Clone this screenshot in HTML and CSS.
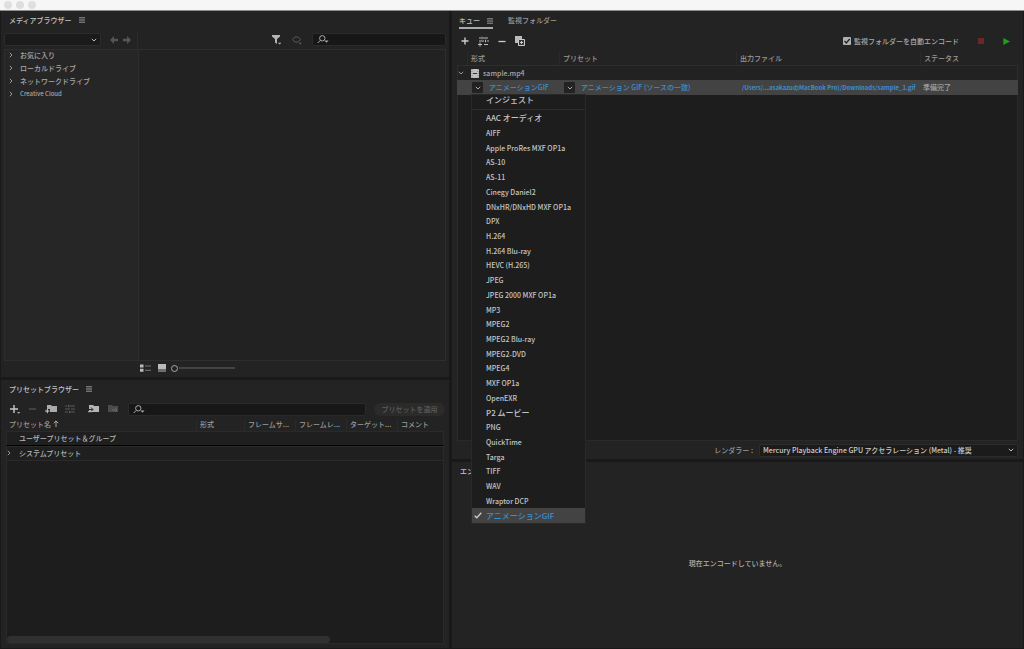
FILE: index.html
```html
<!DOCTYPE html>
<html lang="ja">
<head>
<meta charset="utf-8">
<title>Media Encoder</title>
<link rel="stylesheet" href="styles.css">
</head>
<body>
<header class="titlebar"><i class="light"></i><i class="light"></i><i class="light"></i></header>
<main class="workspace">
  <div class="column column-left">
    <section class="panel media">
      <div class="panel-head"><h2 class="panel-title">メディアブラウザー</h2>
        <button class="icon-btn" aria-label="パネルメニュー"><svg width="6" height="6" viewBox="0 0 6 6" stroke="#999"><path d="M0 .8h6M0 3h6M0 5.200h6"/></svg></button></div>
      <div class="media-tools">
        <div class="media-path">
          <select class="select path-select" aria-label="場所"><option></option></select>
          <button class="icon-btn" aria-label="戻る"><svg width="8" height="8" viewBox="0 0 8 8" fill="#555"><path d="M0 4l4-4v2.700h4v2.600H4V8z"/></svg></button>
          <button class="icon-btn" aria-label="進む"><svg width="8" height="8" viewBox="0 0 8 8" fill="#555"><path d="M8 4L4 0v2.700H0v2.600h4V8z"/></svg></button>
        </div>
        <div class="media-filter">
          <button class="icon-btn" aria-label="フィルター"><svg width="10" height="10" viewBox="0 0 10 10" fill="#b5b5b5"><path d="M0 0h8v1.500L5 4v5L3 7.500V4L0 1.500zM6 7.700h3.400L7.700 9.500z"/></svg></button>
          <button class="icon-btn" aria-label="表示"><svg width="10" height="10" viewBox="0 0 10 10" fill="none" stroke="#606060"><path d="M.6 4.500C2.500 1 6.500 1 8.400 4.500 6.500 8 2.500 8 .6 4.500z"/><path d="M6.500 7.700h3.400L8.200 9.500z" fill="#606060" stroke="none"/></svg></button>
          <label class="search"><svg width="12" height="9" viewBox="0 0 12 9"><circle cx="5.300" cy="3.300" r="2.700" fill="none" stroke="#aaa"/><path d="M3.500 5.200L.7 8" stroke="#aaa"/><path d="M7.500 5.500h4L9.500 7.700z" fill="#aaa"/></svg><input type="text" aria-label="メディアを検索"></label>
        </div>
      </div>
      <div class="media-body">
        <ul class="tree">
          <li><svg class="chev" viewBox="0 0 4 6"><path d="M.8.800L3 3 .8 5.200"/></svg>お気に入り</li>
          <li><svg class="chev" viewBox="0 0 4 6"><path d="M.8.800L3 3 .8 5.200"/></svg>ローカルドライブ</li>
          <li><svg class="chev" viewBox="0 0 4 6"><path d="M.8.800L3 3 .8 5.200"/></svg>ネットワークドライブ</li>
          <li><svg class="chev" viewBox="0 0 4 6"><path d="M.8.800L3 3 .8 5.200"/></svg><span class="small">Creative Cloud</span></li>
        </ul>
        <div class="media-view"></div>
      </div>
      <div class="media-foot">
        <button class="icon-btn" aria-label="リスト表示"><svg width="11" height="8" viewBox="0 0 11 8"><path d="M0 .5h3.500v3H0zM0 4.700h3.500v3H0z" fill="#bbb"/><path d="M5 2h6M5 6.300h6" stroke="#777"/></svg></button>
        <button class="icon-btn" aria-label="サムネール表示"><svg width="8" height="8" viewBox="0 0 8 8" fill="#bbb"><path d="M0 0h8v5.500H0zM0 6.500h8v1H0z"/></svg></button>
        <input class="zoom" type="range" min="0" max="100" value="0" aria-label="サムネールサイズ">
      </div>
    </section>

    <section class="panel presets">
      <div class="panel-head"><h2 class="panel-title">プリセットブラウザー</h2>
        <button class="icon-btn" aria-label="パネルメニュー"><svg width="6" height="6" viewBox="0 0 6 6" stroke="#999"><path d="M0 .8h6M0 3h6M0 5.200h6"/></svg></button></div>
      <div class="preset-tools">
        <button class="icon-btn" aria-label="新規プリセット"><svg width="11" height="10" viewBox="0 0 11 10"><path d="M0 5h8M4 1v8" stroke="#c8c8c8" stroke-width="1.400"/><path d="M7 8h3.400L8.700 9.800z" fill="#aaa"/></svg></button>
        <button class="icon-btn" aria-label="削除"><svg width="8" height="10" viewBox="0 0 8 10"><path d="M0 5h7" stroke="#555" stroke-width="1.200"/></svg></button>
        <button class="icon-btn" aria-label="新規グループ"><svg width="12" height="10" viewBox="0 0 12 10"><path d="M2 1h4l1 1h5v6H5V5H2z" fill="#aaa"/><path d="M0 7h4.500M2.300 4.800v4.400" stroke="#ccc"/></svg></button>
        <button class="icon-btn" aria-label="設定"><svg width="10" height="10" viewBox="0 0 10 10" stroke="#5b5b5b"><path d="M0 2h2M4 2h6M0 5h5M8 5h2M0 8h3M5 8h5M3.500.800v2.400M7 3.800v2.400M4.500 6.800v2.400"/></svg></button>
        <button class="icon-btn import-btn" aria-label="読み込み"><svg width="11" height="10" viewBox="0 0 11 10"><path d="M1 1h4l1 1h5v6H1z" fill="#b5b5b5"/><path d="M.5 5.500h4M3 3.500l2 2-2 2" fill="none" stroke="#222"/><path d="M0 7.700h4" stroke="#b5b5b5"/></svg></button>
        <button class="icon-btn" aria-label="書き出し"><svg width="11" height="10" viewBox="0 0 11 10"><path d="M1 1h4l1 1h5v6H1z" fill="#4b4b4b"/><path d="M5 6h5M8 4l2 2-2 2" fill="none" stroke="#686868"/></svg></button>
        <label class="search"><svg width="12" height="9" viewBox="0 0 12 9"><circle cx="5.300" cy="3.300" r="2.700" fill="none" stroke="#aaa"/><path d="M3.500 5.200L.7 8" stroke="#aaa"/><path d="M7.500 5.500h4L9.500 7.700z" fill="#aaa"/></svg><input type="text" aria-label="プリセットを検索"></label>
        <button class="apply" disabled>プリセットを適用</button>
      </div>
      <table class="preset-table">
        <colgroup><col class="p-name"><col class="p-format"><col class="p-meta"><col class="p-meta"><col class="p-meta"><col></colgroup>
        <thead><tr><th>プリセット名 <svg width="6" height="7" viewBox="0 0 6 7" fill="none" stroke="#aaa"><path d="M3 7V1M.7 3.200L3 .9l2.300 2.300"/></svg></th><th>形式</th><th>フレームサ...</th><th>フレームレ...</th><th>ターゲット...</th><th>コメント</th></tr></thead>
        <tbody>
          <tr class="user"><td colspan="6">ユーザープリセット＆グループ</td></tr>
          <tr class="system"><td colspan="6"><svg class="chev" viewBox="0 0 4 6"><path d="M.8.800L3 3 .8 5.200"/></svg>システムプリセット</td></tr>
        </tbody>
      </table>
      <div class="preset-rest"><div class="scrollbar"></div></div>
    </section>
  </div>

  <div class="column column-right">
    <section class="panel queue">
      <div class="panel-head tabs">
        <div class="tab active"><h2 class="panel-title">キュー</h2><button class="icon-btn" aria-label="パネルメニュー"><svg width="6" height="6" viewBox="0 0 6 6" stroke="#999"><path d="M0 .8h6M0 3h6M0 5.200h6"/></svg></button></div>
        <a class="tab" href="#watch">監視フォルダー</a>
      </div>
      <div class="queue-tools">
        <button class="icon-btn" aria-label="追加"><svg width="8" height="8" viewBox="0 0 8 8"><path d="M.5 4h7M4 .5v7" stroke="#ccc" stroke-width="1.400"/></svg></button>
        <button class="icon-btn" aria-label="出力を追加"><svg width="11" height="11" viewBox="0 0 11 11" stroke="#bbb"><path d="M1 2h2M5 2h5M4 .7v2.600M1 5h5M9 5h2M7.500 3.700v2.600M6 8.500h4M0 8.500h4M2 6.500v4"/></svg></button>
        <button class="icon-btn" aria-label="削除"><svg width="8" height="8" viewBox="0 0 8 8"><path d="M.5 4.500h7" stroke="#ccc" stroke-width="1.300"/></svg></button>
        <button class="icon-btn" aria-label="複製"><svg width="10" height="10" viewBox="0 0 10 10"><path d="M0 0h7v3H3v4H0z" fill="#bbb"/><path d="M3.500 3.500h6v6h-6z" fill="#333" stroke="#ccc"/><path d="M5 6.500h3M6.500 5v3" stroke="#ccc"/></svg></button>
        <label class="auto"><input type="checkbox" checked>監視フォルダーを自動エンコード</label>
        <button class="icon-btn" aria-label="停止"><svg width="6" height="6" viewBox="0 0 6 6"><path d="M0 0h6v6H0z" fill="#6b2626"/></svg></button>
        <button class="icon-btn" aria-label="開始"><svg width="7" height="7" viewBox="0 0 7 7"><path d="M.3 0L7 3.500.3 7z" fill="#1ca01c"/></svg></button>
      </div>
      <table class="queue-table">
        <colgroup><col class="q-lead"><col class="q-format"><col class="q-preset"><col><col class="q-status"></colgroup>
        <thead><tr><td></td><th>形式</th><th>プリセット</th><th>出力ファイル</th><th>ステータス</th></tr></thead>
        <tbody>
          <tr class="source"><td colspan="5"><span class="line"><svg width="6" height="4" viewBox="0 0 6 4" fill="none" stroke="#999"><path d="M.8.800L3 3 5.200.8"/></svg><svg width="8" height="9" viewBox="0 0 8 9"><path d="M0 0h8v9H0z" fill="#c0c0c0"/><path d="M2 4.500h4" stroke="#333"/><path d="M1 0v9M7 0v9" stroke="#888" stroke-dasharray="1 1"/></svg>sample.mp4</span></td></tr>
          <tr class="job"><td></td>
            <td class="format-cell"><span class="line"><button class="drop" aria-label="形式を選択" aria-expanded="true"><svg width="6" height="4" viewBox="0 0 6 4"><path d="M.8.800L3 3 5.200.8"/></svg></button><a href="#format">アニメーションGIF</a></span>
              <div class="menu">
                <button class="menu-top kana">インジェスト</button>
                <ul class="formats">
                  <li><button class="kana">AAC オーディオ</button></li><li><button>AIFF</button></li><li><button>Apple ProRes MXF OP1a</button></li><li><button>AS-10</button></li><li><button>AS-11</button></li><li><button>Cinegy Daniel2</button></li><li><button>DNxHR/DNxHD MXF OP1a</button></li><li><button>DPX</button></li><li><button>H.264</button></li><li><button>H.264 Blu-ray</button></li><li><button>HEVC (H.265)</button></li><li><button>JPEG</button></li><li><button>JPEG 2000 MXF OP1a</button></li><li><button>MP3</button></li><li><button>MPEG2</button></li><li><button>MPEG2 Blu-ray</button></li><li><button>MPEG2-DVD</button></li><li><button>MPEG4</button></li><li><button>MXF OP1a</button></li><li><button>OpenEXR</button></li><li><button class="kana">P2 ムービー</button></li><li><button>PNG</button></li><li><button>QuickTime</button></li><li><button>Targa</button></li><li><button>TIFF</button></li><li><button>WAV</button></li><li><button>Wraptor DCP</button></li>
                  <li><button class="kana chosen"><svg width="8" height="7" viewBox="0 0 8 7" fill="none" stroke="#ccc" stroke-width="1.300"><path d="M.7 3.700L2.800 5.800 7.300.8"/></svg>アニメーションGIF</button></li>
                </ul>
              </div></td>
            <td><span class="line"><button class="drop" aria-label="プリセットを選択"><svg width="6" height="4" viewBox="0 0 6 4"><path d="M.8.800L3 3 5.200.8"/></svg></button><a href="#preset">アニメーション GIF (ソースの一致)</a></span></td>
            <td class="output"><a class="small" href="#output">/Users/...asakazuのMacBook Pro)/Downloads/sample_1.gif</a></td>
            <td class="status">準備完了</td></tr>
        </tbody>
      </table>
      <div class="queue-rest"></div>
      <div class="renderer"><label for="renderer">レンダラー :</label>
        <select class="select" id="renderer"><option>Mercury Playback Engine GPU アクセラレーション (Metal) - 推奨</option></select></div>
    </section>
    <section class="panel encoding">
      <div class="panel-head"><h2 class="panel-title">エンコード</h2></div>
      <p class="idle">現在エンコードしていません。</p>
    </section>
  </div>
</main>
</body>
</html>
```
FILE: styles.css
```css
* { box-sizing: border-box; }
body {
  margin: 0;
  height: 100vh;
  display: flex;
  flex-direction: column;
  background: #191919;
  color: #a8a8a8;
  font: 500 7px/12px "Noto Sans CJK JP", sans-serif;
  overflow: hidden;
}
button, input, select { font: inherit; color: inherit; margin: 0; padding: 0; border: 0; background: none; }
svg { display: block; flex: none; }
ul { list-style: none; margin: 0; padding: 0; }
a { color: #3a8fd0; text-decoration: none; }
h2, p { margin: 0; font: inherit; }
.small { font-size: 6px; }

.titlebar { display: flex; gap: 4px; padding: 1px 4px; height: 11px; background: #f6f6f6; border-bottom: 1px solid #8b908d; }
.light { width: 8px; height: 8px; border-radius: 50%; background: #dedede; }

.workspace { flex: 1; min-height: 0; display: grid; grid-template-columns: 448fr 571fr; gap: 3px; padding: 0 1px 1px; }
.column { display: grid; gap: 3px; min-width: 0; min-height: 0; }
.column-left { grid-template-rows: 366fr 268fr; }
.column-right { grid-template-rows: 448fr 186fr; }
.panel { background: #232323; display: flex; flex-direction: column; min-width: 0; min-height: 0; }
.panel-head { display: flex; align-items: center; gap: 7px; height: 19px; padding: 0 8px 2px; flex: none; }
.panel-head .icon-btn { padding-top: 1px; }
.panel-title { color: #c4c4c4; }
.icon-btn { display: flex; flex: none; }

.select {
  appearance: none;
  height: 13px;
  border: 1px solid #2c2c2c;
  border-radius: 2px;
  background: #1b1b1b url("data:image/svg+xml,%3Csvg xmlns='http://www.w3.org/2000/svg' width='6' height='4' fill='none' stroke='%23bbb'%3E%3Cpath d='M.8.8L3 3 5.200.8'/%3E%3C/svg%3E") no-repeat right 3px center;
}
.search { display: flex; align-items: center; height: 13px; padding: 0 4px; background: #171717; border: 1px solid #2a2a2a; border-radius: 2px; }
.search input { flex: 1; min-width: 0; outline: 0; }

/* Media browser */
.media-tools { display: grid; grid-template-columns: 134px 1fr; height: 19px; padding: 0 3px; align-items: center; flex: none; }
.media-path { display: flex; align-items: center; gap: 5px; height: 15px; border-right: 1px solid #2c2c2c; }
.path-select { width: 97px; margin-right: 4px; }
.media-filter { display: flex; align-items: center; justify-content: flex-end; gap: 10px; }
.media-filter .search { width: 134px; }
.media-body { flex: 1; min-height: 0; display: grid; grid-template-columns: 134px 1fr; margin: 0 3px; border: 1px solid #2e2e2e; }
.tree { background: #262626; border-right: 1px solid #2e2e2e; }
.tree li { display: flex; align-items: center; gap: 7px; height: 13px; padding: 0 0 3px 4px; }
.media-view { background: #222; }
.chev { width: 4px; height: 6px; fill: none; stroke: #999; }
.media-foot { display: flex; align-items: center; gap: 7px; height: 16px; padding: 0 0 2px 139px; flex: none; }
.zoom { appearance: none; width: 64px; height: 8px; margin-left: -2px; background: linear-gradient(#444, #444) right center / 56px 2px no-repeat; }
.zoom::-webkit-slider-thumb { appearance: none; width: 7px; height: 7px; border: 1px solid #aaa; border-radius: 50%; background: #232323; }

/* Preset browser */
.preset-tools { display: flex; align-items: center; gap: 8px; height: 20px; padding: 0 4px 0 9px; flex: none; }
.import-btn { margin-left: 5px; }
.preset-tools .search { flex: 1; margin-left: 2px; }
.apply { width: 71px; height: 13px; border-radius: 7px; background: #2b2b2b; color: #5d5d5d; line-height: 12px; }
table { border-collapse: separate; border-spacing: 0; table-layout: fixed; flex: none; }
th, td { padding: 0; font-weight: 500; line-height: 10px; text-align: left; white-space: nowrap; vertical-align: middle; }
th { border-left: 1px solid #2a2a2a; padding: 0 0 2px 3px; color: #999; }
.preset-table { margin: 0 5px; width: calc(100% - 10px); }
.preset-table thead tr { height: 12px; }
.preset-table th:first-child { border: 0; }
.preset-table th svg { display: inline-block; }
.p-name { width: 190px; }
.p-format { width: 48px; }
.p-meta { width: 51px; }
.preset-table tbody td { height: 15px; padding: 0 0 2px 12px; background: #1f1f1f; border: 1px solid #2a2a2a; color: #b4b4b4; }
.preset-table .user td { border-bottom: 1px solid #000; }
.system .chev { float: left; margin: 2px 8px 0 -12px; }
.preset-rest { flex: 1; display: flex; align-items: flex-end; margin: 0 5px 4px; background: #1d1d1d; border: 1px solid #2a2a2a; border-top: 0; }
.scrollbar { width: 74%; height: 7px; border-radius: 4px; background: #303030; }

/* Queue */
.tabs { gap: 15px; padding: 0 7px; align-items: stretch; }
.tab { display: flex; align-items: center; gap: 7px; padding-bottom: 1px; color: #999; }
.tab.active { border-bottom: 2px solid #aaa; height: 18px; padding: 2px 0 0; }
.queue-tools { display: flex; align-items: center; gap: 9px; height: 22px; padding: 0 13px 0 9px; flex: none; }
.auto { display: flex; align-items: center; gap: 3px; margin-left: auto; margin-right: 10px; line-height: 10px; }
.auto input { appearance: none; width: 8px; height: 8px; border-radius: 1px; background: #b0b0b0 url("data:image/svg+xml,%3Csvg xmlns='http://www.w3.org/2000/svg' width='8' height='8' fill='none' stroke='%23222' stroke-width='1.3'%3E%3Cpath d='M1.500 4l1.800 2L6.700 2'/%3E%3C/svg%3E"); }
.queue-tools .icon-btn:last-child { margin-left: 10px; }
.queue-table { margin: 0 5px; width: calc(100% - 10px); }
.queue-table thead tr { height: 13px; }
.q-lead { width: 10px; }
.q-format { width: 92px; }
.q-preset { width: 177px; }
.q-status { width: 98px; }
.queue-table tbody td { height: 15px; }
.source td { background: #222; border: 1px solid #2e2e2e; border-bottom: 0; }
.line { display: flex; align-items: center; }
.source .line { gap: 7px; }
.source .line svg + svg { margin-right: -3px; }
.job td { background: #434343; }
.job a { display: block; padding-bottom: 2px; }
.job .output a { padding: 0; }
.format-cell { position: relative; }
.job .line { padding-left: 5px; gap: 6px; }
.drop { display: grid; place-items: center; width: 11px; height: 11px; border-radius: 1px; background: #222; fill: none; stroke: #aaa; }
.job .output { padding-left: 6px; font-weight: 700; }
.job .status { padding: 0 0 2px 3px; }
.queue-rest { flex: 1; margin: 0 5px; background: #1d1d1d; border: 1px solid #2a2a2a; border-top: 0; }
.renderer { display: flex; align-items: center; justify-content: flex-end; gap: 6px; height: 18px; padding: 0 5px; flex: none; color: #999; }
.renderer label { padding-bottom: 1px; }
.renderer .select { width: 259px; padding-left: 3px; line-height: 11px; color: #ccc; }
.encoding { color: #b0b0b0; }
.idle { flex: 1; display: grid; place-items: center; padding-bottom: 4px; }

/* Format menu */
.menu { position: absolute; z-index: 2; top: 14px; left: 4px; width: 115px; background: #1d1d1d; border: 1px solid #292929; color: #c4c4c4; }
.menu button { display: flex; align-items: center; width: 100%; height: 100%; padding-left: 14px; text-align: left; white-space: nowrap; }
.menu .kana { font-size: 8px; }
.menu .menu-top { height: 12px; margin-bottom: 2px; padding-bottom: 3px; }
.formats { display: grid; grid-auto-rows: 1fr; height: 414px; padding-top: 1px; border-top: 1px solid #2d2d2d; }
.menu .chosen { gap: 4px; padding-left: 2px; background: #434343; color: #3a8fd0; }
```
